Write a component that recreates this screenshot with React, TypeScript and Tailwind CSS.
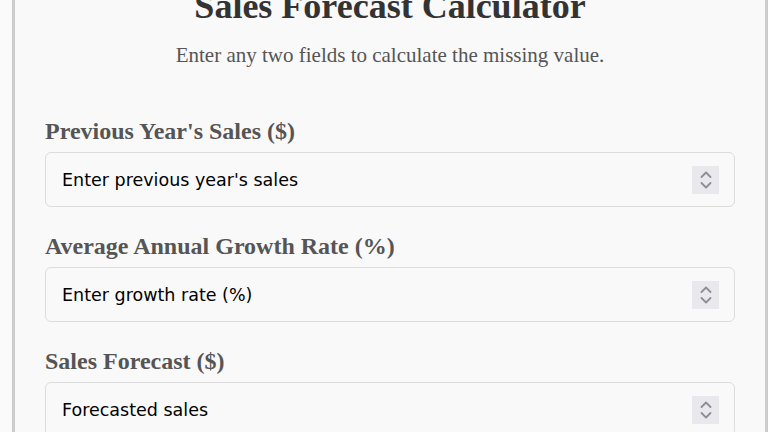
import React, { useState } from 'react'

type Field = {
  id: string
  label: string
  placeholder: string
}

const fields: Field[] = [
  { id: 'previous', label: "Previous Year's Sales ($)", placeholder: "Enter previous year's sales" },
  { id: 'growth', label: 'Average Annual Growth Rate (%)', placeholder: 'Enter growth rate (%)' },
  { id: 'forecast', label: 'Sales Forecast ($)', placeholder: 'Forecasted sales' },
]

// little up/down stepper drawn at the right end of each input
const Spinner: React.FC = () => (
  <div className="absolute right-[16px] top-1/2 -translate-y-1/2 w-[27px] h-[28px] bg-[#e9e9ed] flex items-center justify-center">
    <svg width="14" height="22" viewBox="0 0 14 22" fill="none" stroke="#8d8d98" strokeWidth="1.8" strokeLinecap="round" strokeLinejoin="round">
      <path d="M2.5 8 L7 3.5 L11.5 8" />
      <path d="M2.5 14 L7 18.5 L11.5 14" />
    </svg>
  </div>
)

const NumberField: React.FC<{ field: Field; value: string; onChange: (v: string) => void }> = ({ field, value, onChange }) => {
  return (
    <div className="flex flex-col gap-[7px]">
      <label
        htmlFor={field.id}
        className="text-[24px] font-bold leading-[28px] text-[#555] [font-family:'Liberation_Serif',serif]"
      >
        {field.label}
      </label>
      <div className="relative">
        <input
          id={field.id}
          type="text"
          inputMode="decimal"
          value={value}
          onChange={(e) => onChange(e.target.value)}
          placeholder={field.placeholder}
          className="w-full h-[55px] rounded-[6px] border border-[#dcdcdc] bg-[#f9f9f9] pl-4 pr-12 text-[17.5px] text-black placeholder:text-black outline-none [font-family:'DejaVu_Sans',sans-serif]"
        />
        <Spinner />
      </div>
    </div>
  )
}

const App: React.FC = () => {
  const [values, setValues] = useState<Record<string, string>>({ previous: '', growth: '', forecast: '' })

  return (
    <div className="min-h-screen bg-[#fafafa] overflow-hidden">
      <div className="ml-[12px] -mt-[17px] border-[3px] border-[#cccccc] bg-[#f9f9f9] pl-[30px] pr-[30px] pb-10">
        <h1 className="text-center text-[36px] font-bold leading-[40px] text-[#333] [font-family:'Liberation_Serif',serif]">
          Sales Forecast Calculator
        </h1>
        <p className="mt-[17px] text-center text-[21px] leading-[24px] text-[#555] [font-family:'Liberation_Serif',serif]">
          Enter any two fields to calculate the missing value.
        </p>
        <div className="mt-[50px] flex flex-col gap-[25px]">
          {fields.map((f) => (
            <NumberField
              key={f.id}
              field={f}
              value={values[f.id]}
              onChange={(v) => setValues((prev) => ({ ...prev, [f.id]: v }))}
            />
          ))}
        </div>
      </div>
    </div>
  )
}

export default App
